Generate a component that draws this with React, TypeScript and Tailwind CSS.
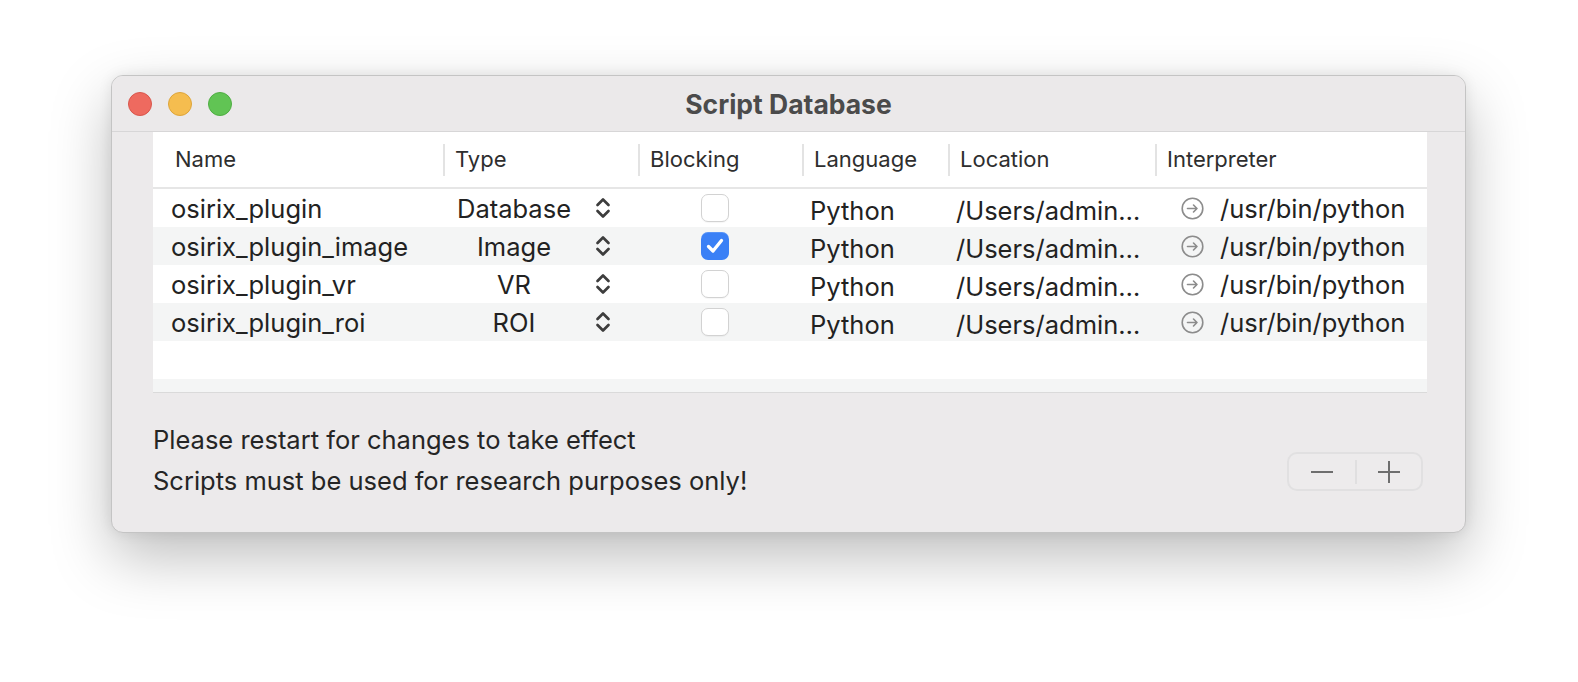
import React from 'react';

type Row = {
    name: string;
    type: string;
    blocking: boolean;
};

const rows: Row[] = [
    { name: 'osirix_plugin', type: 'Database', blocking: false },
    { name: 'osirix_plugin_image', type: 'Image', blocking: true },
    { name: 'osirix_plugin_vr', type: 'VR', blocking: false },
    { name: 'osirix_plugin_roi', type: 'ROI', blocking: false },
];

const headers = [
    { label: 'Type', width: 'w-[195px]' },
    { label: 'Blocking', width: 'w-[164px]' },
    { label: 'Language', width: 'w-[146px]' },
    { label: 'Location', width: 'w-[207px]' },
    { label: 'Interpreter', width: 'w-[272px]' },
];

const UpDown = () => (
    <svg width="18" height="26" viewBox="0 0 18 26" fill="none">
        <path d="M3.5 10 L9 4.5 L14.5 10" stroke="#3d3d3d" strokeWidth="2.7" strokeLinecap="round" strokeLinejoin="round" />
        <path d="M3.5 16 L9 21.5 L14.5 16" stroke="#3d3d3d" strokeWidth="2.7" strokeLinecap="round" strokeLinejoin="round" />
    </svg>
);

const ArrowCircle = () => (
    <svg width="23" height="23" viewBox="0 0 23 23" fill="none">
        <circle cx="11.5" cy="11.5" r="10.3" stroke="#8c8c8c" strokeWidth="1.6" />
        <path d="M6.5 11.5 H16 M12.5 8 L16 11.5 L12.5 15" stroke="#8c8c8c" strokeWidth="1.6" strokeLinecap="round" strokeLinejoin="round" />
    </svg>
);

const Checkbox = ({ checked }: { checked: boolean }) =>
    checked ? (
        <div className="w-[28px] h-[28px] rounded-[7px] bg-[#3a80f6] flex items-center justify-center shadow-[inset_0_1px_0_rgba(255,255,255,0.15)]">
            <svg width="20" height="18" viewBox="0 0 20 18" fill="none">
                <path d="M3.5 9.5 L8 14 L16.5 3.5" stroke="#fff" strokeWidth="3.3" strokeLinecap="round" strokeLinejoin="round" />
            </svg>
        </div>
    ) : (
        <div className="w-[28px] h-[28px] rounded-[7px] bg-white border-[1.5px] border-[#d2d2d2] shadow-[0_1px_1px_rgba(0,0,0,0.04)]" />
    );

export default function App() {
    return (
        <div className="w-[1578px] h-[682px] bg-white pt-[75px] pl-[111px] font-['Inter','Liberation_Sans',sans-serif]">
            <div className="w-[1355px] h-[458px] rounded-[12px] bg-[#eceaeb] border border-[#c4c4c4] shadow-[0_24px_60px_rgba(0,0,0,0.26),0_0_14px_rgba(0,0,0,0.08)] overflow-hidden flex flex-col">
                {/* Title bar */}
                <div className="relative h-[56px] shrink-0 bg-[#ebe9ea] border-b border-[#d7d6d7] flex items-center pl-[16px] gap-[16px]">
                    <div className="w-[24px] h-[24px] rounded-full bg-[#ee6a5f] border border-[#d9564c]" />
                    <div className="w-[24px] h-[24px] rounded-full bg-[#f5bd4f] border border-[#dea53a]" />
                    <div className="w-[24px] h-[24px] rounded-full bg-[#61c454] border border-[#4fae43]" />
                    <div className="absolute inset-0 flex items-center justify-center text-[26.5px] font-bold text-[#4b4b4b] pt-[2px]">
                        Script Database
                    </div>
                </div>

                {/* Table */}
                <div className="ml-[41px] mr-[38px] h-[261px] shrink-0 bg-white border-b border-[#dadada] overflow-hidden">
                    <div className="h-[57px] flex items-center border-b-2 border-[#e6e6e6] text-[22px] text-[#2e2e2e]">
                        <div className="w-[290px] pl-[22px]">Name</div>
                        {headers.map((h) => (
                            <div key={h.label} className={`${h.width} flex items-center`}>
                                <div className="w-[2px] h-[32px] bg-[#e3e3e3]" />
                                <span className="ml-[10px]">{h.label}</span>
                            </div>
                        ))}
                    </div>

                    {rows.map((row, i) => (
                        <div
                            key={row.name}
                            className={`h-[38px] flex items-center text-[25.5px] text-[#222222] ${i % 2 === 1 ? 'bg-[#f4f5f5]' : 'bg-white'}`}
                        >
                            <div className="w-[290px] pl-[18px] pt-[3px]">{row.name}</div>
                            <div className="w-[195px] flex items-center">
                                <div className="w-[142px] text-center pt-[3px]">{row.type}</div>
                                <div className="ml-[9px]">
                                    <UpDown />
                                </div>
                            </div>
                            <div className="w-[164px] pl-[63px]">
                                <Checkbox checked={row.blocking} />
                            </div>
                            <div className="w-[146px] pl-[8px] pt-[6px]">Python</div>
                            <div className="w-[207px] pl-[8px] pt-[6px] whitespace-nowrap">/Users/admin…</div>
                            <div className="w-[272px] pl-[26px] flex items-center">
                                <ArrowCircle />
                                <span className="ml-[16px] pt-[3px]">/usr/bin/python</span>
                            </div>
                        </div>
                    ))}
                    <div className="h-[38px] bg-white" />
                    <div className="h-[38px] bg-[#f4f5f5]" />
                </div>

                {/* Footer */}
                <div className="flex-1 flex justify-between pl-[41px] pr-[42px]">
                    <div className="pt-[26px] text-[25.5px] leading-[41px] text-[#252525]">
                        <div>Please restart for changes to take effect</div>
                        <div>Scripts must be used for research purposes only!</div>
                    </div>
                    <div className="mt-[59px] w-[136px] h-[39px] rounded-[10px] border-2 border-[#e1e0e1] bg-[#edebec] flex items-center">
                        <div className="w-[66px] flex justify-center">
                            <div className="w-[22px] h-[2px] bg-[#6e6e6e]" />
                        </div>
                        <div className="w-[2px] h-[24px] bg-[#e0dfe0]" />
                        <div className="flex-1 flex justify-center">
                            <svg width="22" height="22" viewBox="0 0 22 22">
                                <path d="M11 0 V22 M0 11 H22" stroke="#6e6e6e" strokeWidth="2" />
                            </svg>
                        </div>
                    </div>
                </div>
            </div>
        </div>
    );
}
